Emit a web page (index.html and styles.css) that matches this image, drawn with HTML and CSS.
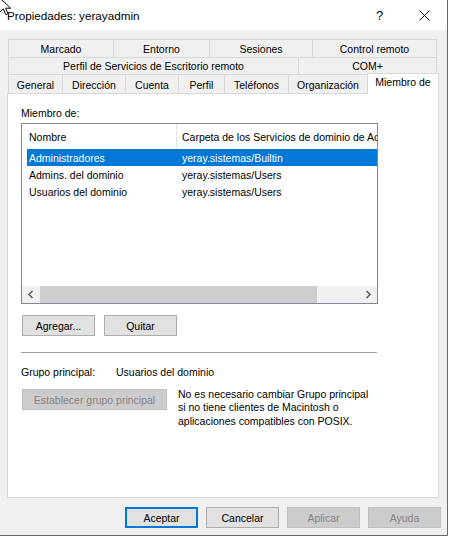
FILE: index.html
```html
<!DOCTYPE html>
<html lang="es">
<head>
<meta charset="utf-8">
<title>Propiedades: yerayadmin</title>
<link rel="stylesheet" href="styles.css">
</head>
<body>
<div class="window">
  <div class="titlebar">
    <span class="title">Propiedades: yerayadmin</span>
    <span class="tb-btn">?</span>
    <span class="tb-btn">
      <svg width="11" height="11" viewBox="0 0 11 11"><path d="M0.5 0.5L10.5 10.5M10.5 0.5L0.5 10.5" stroke="#000" stroke-width="1" fill="none"/></svg>
    </span>
  </div>

  <div class="client">
    <div class="tabs">
      <div class="tab-row r1">
        <div class="tab">Marcado</div>
        <div class="tab">Entorno</div>
        <div class="tab">Sesiones</div>
        <div class="tab">Control remoto</div>
      </div>
      <div class="tab-row r2">
        <div class="tab">Perfil de Servicios de Escritorio remoto</div>
        <div class="tab">COM+</div>
      </div>
      <div class="tab-row r3">
        <div class="tab">General</div>
        <div class="tab">Dirección</div>
        <div class="tab">Cuenta</div>
        <div class="tab">Perfil</div>
        <div class="tab">Teléfonos</div>
        <div class="tab">Organización</div>
        <div class="tab sel">Miembro de</div>
      </div>
    </div>

    <div class="panel">
      <div class="label">Miembro de:</div>

      <div class="listbox">
        <div class="lv-head">
          <div class="c1">Nombre</div>
          <div class="c2">Carpeta de los Servicios de dominio de Active Directory</div>
        </div>
        <div class="lv-body">
          <div class="lv-row sel"><span class="c1">Administradores</span><span class="c2">yeray.sistemas/Builtin</span></div>
          <div class="lv-row"><span class="c1">Admins. del dominio</span><span class="c2">yeray.sistemas/Users</span></div>
          <div class="lv-row"><span class="c1">Usuarios del dominio</span><span class="c2">yeray.sistemas/Users</span></div>
        </div>
        <div class="hscroll">
          <div class="sb-btn">
            <svg width="7" height="9" viewBox="0 0 7 9"><path d="M5.5 1L2 4.5L5.5 8" stroke="#606060" stroke-width="1.6" fill="none"/></svg>
          </div>
          <div class="sb-track"><div class="sb-thumb"></div></div>
          <div class="sb-btn">
            <svg width="7" height="9" viewBox="0 0 7 9"><path d="M1.5 1L5 4.5L1.5 8" stroke="#606060" stroke-width="1.6" fill="none"/></svg>
          </div>
        </div>
      </div>

      <div class="btn-row">
        <button class="btn">Agregar...</button>
        <button class="btn">Quitar</button>
      </div>

      <div class="sep"></div>

      <div class="grp">
        <span class="grp-key">Grupo principal:</span>
        <span>Usuarios del dominio</span>
      </div>

      <div class="est">
        <button class="btn btn-wide" disabled>Establecer grupo principal</button>
        <p class="note">No es necesario cambiar Grupo principal<br>si no tiene clientes de Macintosh o<br>aplicaciones compatibles con POSIX.</p>
      </div>
    </div>

    <div class="footer">
      <button class="btn btn-default">Aceptar</button>
      <button class="btn">Cancelar</button>
      <button class="btn" disabled>Aplicar</button>
      <button class="btn" disabled>Ayuda</button>
    </div>
  </div>
</div>

<svg class="cursor" width="14" height="20" viewBox="0 0 14 20">
  <path d="M0.5 0.5L0.5 15.5L4.3 11.9L6.8 17.6L9 16.7L6.6 11.2L11.6 11.2Z" fill="#fff" stroke="#000" stroke-width="1" stroke-linejoin="miter"/>
</svg>
</body>
</html>
```

FILE: styles.css
```css
* {
  box-sizing: border-box;
}

html,
body {
  margin: 0;
  padding: 0;
  background: #ffffff;
}

body {
  position: relative;
  width: 450px;
  height: 538px;
  overflow: hidden;
  font-family: "Liberation Sans", Arial, sans-serif;
  font-size: 10.5px;
  color: #000;
}

button {
  font: inherit;
  color: inherit;
  padding: 0;
  margin: 0;
}

/* window frame */
.window {
  width: 448px;
  height: 536px;
  display: flex;
  flex-direction: column;
  background: #f0f0f0;
  border-right: 1px solid #6a6a6a;
  border-bottom: 1px solid #6a6a6a;
}

.titlebar {
  height: 30px;
  flex: none;
  display: flex;
  align-items: center;
  padding-left: 7px;
  background: #ffffff;
  font-size: 11.7px;
}

.title {
  flex: 1;
}

.tb-btn {
  width: 45px;
  height: 30px;
  display: flex;
  align-items: center;
  justify-content: center;
  font-size: 13px;
}

.client {
  flex: 1;
  padding: 9px 0 0 7px;
  display: flex;
  flex-direction: column;
}

/* tab strip */
.tabs {
  width: 432px;
}

.tab-row {
  display: grid;
  margin-left: 1px;
}

.r1 {
  grid-template-columns: 105px 96px 103px 125px;
  height: 18px;
}

.r2 {
  grid-template-columns: 290px 139px;
  height: 17px;
}

.r3 {
  grid-template-columns: 54px 63px 53px 46px 64px 79px 72px;
  height: 19px;
}

.tab {
  display: flex;
  align-items: center;
  justify-content: center;
  white-space: nowrap;
  border-top: 1px solid #d9d9d9;
  border-left: 1px solid #d9d9d9;
}

.tab:last-child {
  border-right: 1px solid #d9d9d9;
}

.r3 .tab {
  padding-top: 2px;
}

.r3 .tab.sel {
  position: relative;
  z-index: 1;
  margin-top: -1px;
  margin-bottom: -1px;
  align-items: flex-start;
  padding-top: 2px;
  background: #ffffff;
  border: 1px solid #d9d9d9;
  border-bottom: none;
}

/* page body */
.panel {
  width: 432px;
  height: 405px;
  flex: none;
  padding: 12px 0 0 13px;
  background: #ffffff;
  border: 1px solid #d9d9d9;
}

.label {
  height: 14px;
  line-height: 14px;
  margin-bottom: 3px;
}

/* list view */
.listbox {
  width: 357px;
  height: 181px;
  display: flex;
  flex-direction: column;
  overflow: hidden;
  border: 1px solid #828790;
}

.lv-head {
  height: 25px;
  flex: none;
  display: flex;
  white-space: nowrap;
}

.lv-head .c1 {
  width: 155px;
  flex: none;
  display: flex;
  align-items: center;
  padding-left: 7px;
  border-right: 1px solid #e5e5e5;
}

.lv-head .c2 {
  flex: 1;
  display: flex;
  align-items: center;
  padding-left: 5px;
  overflow: hidden;
}

.lv-body {
  flex: 1;
  padding-left: 5px;
}

.lv-row {
  height: 17px;
  display: flex;
  align-items: center;
  white-space: nowrap;
}

.lv-row.sel {
  background: #0078d7;
  color: #ffffff;
}

.lv-row .c1 {
  width: 153px;
  flex: none;
  padding-left: 2px;
}

.lv-row .c2 {
  padding-left: 2px;
}

.hscroll {
  height: 17px;
  flex: none;
  display: flex;
  background: #f0f0f0;
}

.sb-btn {
  width: 17px;
  flex: none;
  display: flex;
  align-items: center;
  justify-content: center;
}

.sb-track {
  flex: 1;
  display: flex;
}

.sb-thumb {
  width: 277px;
  margin-left: 1px;
  background: #cdcdcd;
}

/* push buttons */
.btn {
  width: 73px;
  height: 21px;
  display: flex;
  align-items: center;
  justify-content: center;
  background: #e1e1e1;
  border: 1px solid #adadad;
}

.btn:disabled {
  background: #cccccc;
  border-color: #bfbfbf;
  color: #838383;
}

.btn-default {
  border: 2px solid #0078d7;
}

.btn-wide {
  width: 145px;
}

.btn-row {
  display: flex;
  gap: 9px;
  margin: 11px 0 0 1px;
}

.sep {
  width: 356px;
  height: 1px;
  margin-top: 16px;
  background: #a0a0a0;
}

.grp {
  display: flex;
  height: 14px;
  line-height: 14px;
  margin-top: 12px;
}

.grp-key {
  width: 95px;
}

.est {
  display: flex;
  gap: 11px;
  margin: 10px 0 0 1px;
}

.note {
  margin: -1px 0 0;
  line-height: 13.4px;
  white-space: nowrap;
}

/* dialog buttons */
.footer {
  display: flex;
  justify-content: flex-end;
  gap: 8px;
  margin-top: 9px;
  padding-right: 6px;
}

/* mouse pointer on top of the title */
.cursor {
  position: absolute;
  left: -1px;
  top: -3px;
}
```
